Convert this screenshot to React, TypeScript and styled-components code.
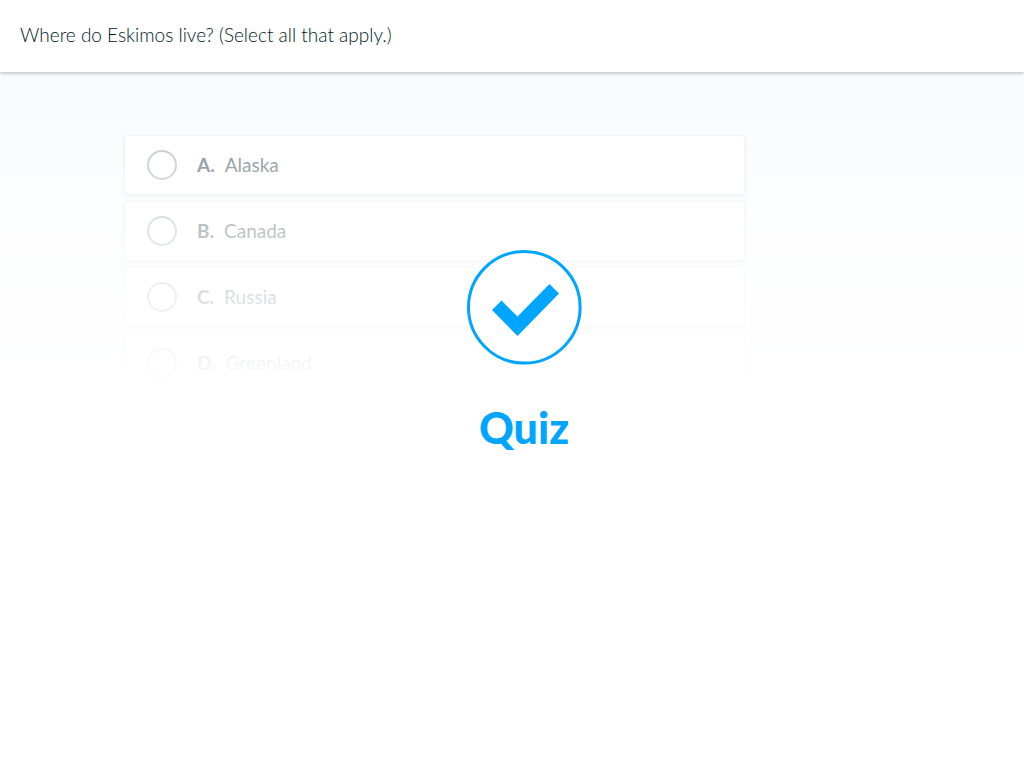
import React from "react";
import styled, { createGlobalStyle } from "styled-components";

const GlobalStyle = createGlobalStyle`
  *, *::before, *::after { box-sizing: border-box; }
  body {
    margin: 0;
    background: #fff;
    color: #1c3643;
    font-family: Lato, "Open Sans", sans-serif;
    font-size: 19px;
    line-height: 24px;
  }
`;

const Page = styled.div`
  display: flex;
  flex-direction: column;
  min-height: 100vh;
`;

const Header = styled.header`
  position: relative;
  z-index: 1;
  padding: 23px 20px 25px;
  background: #fff;
  box-shadow: 0 1px 4px rgba(0, 0, 0, 0.3);
`;

const Question = styled.h1`
  margin: 0;
  color: #001826;
  font-size: 19px;
  font-weight: 300;
  line-height: 24px;
`;

const Main = styled.main`
  position: relative;
  flex: 1;
  background: #f7f9fc;
`;

const Options = styled.form`
  display: flex;
  flex-direction: column;
  gap: 6px;
  padding: 63px 279px 63px 124px;
`;

const Option = styled.label`
  display: flex;
  align-items: center;
  height: 60px;
  padding: 0 22px;
  border: 1px solid #e3e7ea;
  border-radius: 4px;
  background: #fff;
  box-shadow: 0 1px 3px rgba(28, 54, 67, 0.15);
`;

const Tick = styled.input`
  appearance: none;
  width: 30px;
  height: 30px;
  margin: 0 20px 0 0;
  border: 2px solid #98a3ab;
  border-radius: 50%;
  background: #fff;

  &:checked {
    background: #00a5ff;
  }
`;

const Letter = styled.b`
  margin-right: 10px;
  font-weight: 700;
`;

const Cover = styled.div`
  position: absolute;
  inset: 0;
  display: flex;
  flex-direction: column;
  align-items: center;
  gap: 38px;
  padding: 178px 0 0 24px;
  pointer-events: none;
  background: linear-gradient(
    rgba(255, 255, 255, 0.3) 0,
    rgba(255, 255, 255, 0.54) 93px,
    rgba(255, 255, 255, 0.7) 159px,
    rgba(255, 255, 255, 0.84) 225px,
    rgba(255, 255, 255, 0.95) 291px,
    #fff 316px
  );
`;

const Badge = styled.svg`
  display: block;
  width: 115px;
  height: 115px;
`;

const Title = styled.h2`
  margin: 0;
  color: #00a5ff;
  font-size: 43px;
  font-weight: 900;
  line-height: 50px;
`;

const places = ["Alaska", "Canada", "Russia", "Greenland"];

export default function App() {
  return (
    <Page>
      <GlobalStyle />
      <Header>
        <Question>Where do Eskimos live? (Select all that apply.)</Question>
      </Header>
      <Main>
        <Options>
          {places.map((place, i) => (
            <Option key={place}>
              <Tick type="checkbox" name="place" value={place} />
              <Letter>{"ABCD"[i]}.</Letter>
              <span>{place}</span>
            </Option>
          ))}
        </Options>
        <Cover>
          <Badge viewBox="0 0 115 115" aria-hidden="true">
            <circle cx="57.3" cy="57.3" r="55.8" fill="#fff" stroke="#00a5ff" strokeWidth="3" />
            <path d="M25 60L34.5 50.5L50.5 66.5L82.5 34L92 43.5L50.5 86Z" fill="#00a5ff" />
          </Badge>
          <Title>Quiz</Title>
        </Cover>
      </Main>
    </Page>
  );
}
